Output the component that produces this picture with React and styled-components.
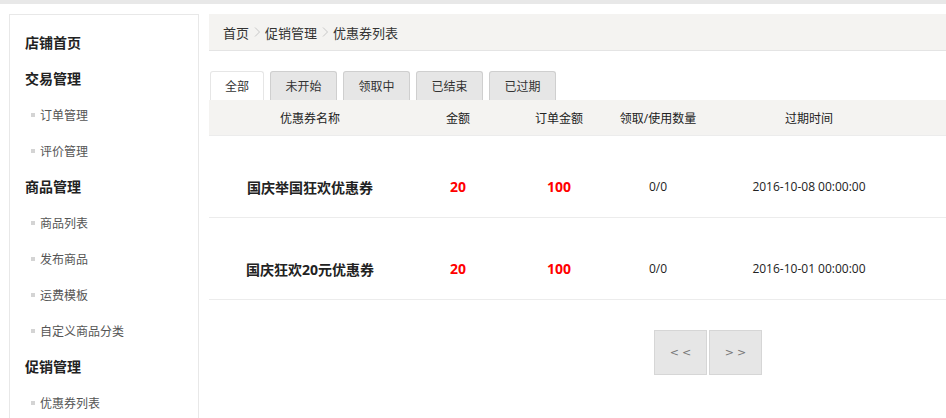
import React from 'react';
import styled, { createGlobalStyle } from 'styled-components';

const GlobalStyle = createGlobalStyle`
  html, body {
    margin: 0;
    padding: 0;
    background: #fff;
    font-family: "Open Sans", "Noto Sans CJK SC", sans-serif;
    color: #333;
  }
`;

const TopStrip = styled.div`
  height: 4px;
  background: #e8e8e8;
`;

const Page = styled.div`
  display: flex;
  align-items: flex-start;
  gap: 10px;
  padding: 10px 0 0 9px;
  height: 404px;
  overflow: hidden;
`;

const Sidebar = styled.nav`
  flex: 0 0 190px;
  min-height: 420px;
  border: 1px solid #e8e8e8;
  padding: 9px 0 0 15px;
  box-sizing: border-box;
`;

const NavGroup = styled.div`
  height: 36px;
  display: flex;
  align-items: center;
  font-size: 14px;
  font-weight: bold;
  color: #222;
`;

const NavItem = styled.div`
  height: 36px;
  display: flex;
  align-items: center;
  gap: 5px;
  padding: 2px 0 0 6px;
  box-sizing: border-box;
  font-size: 12px;
  color: #555;

  &::before {
    content: '';
    width: 4px;
    height: 4px;
    background: #d4d4d4;
  }
`;

const Main = styled.main`
  flex: 1;
  min-width: 0;
`;

const Breadcrumb = styled.div`
  height: 36px;
  background: #f4f3f1;
  border-bottom: 1px solid #e4e4e4;
  display: flex;
  align-items: center;
  gap: 4px;
  padding-left: 14px;
  font-size: 13px;
  color: #333;
`;

const Tabs = styled.div`
  display: flex;
  gap: 6px;
  margin-top: 20px;
  padding-left: 1px;
`;

const Tab = styled.div`
  width: ${p => (p.$active ? 54 : 67)}px;
  height: 29px;
  box-sizing: border-box;
  display: flex;
  align-items: center;
  justify-content: center;
  font-size: 12px;
  color: #333;
  border: 1px solid ${p => (p.$active ? '#e6e6e6' : '#cfcfcf')};
  border-bottom: none;
  border-radius: 3px 3px 0 0;
  background: ${p => (p.$active ? '#fff' : '#e6e6e6')};
`;

const Row = styled.div`
  display: grid;
  grid-template-columns: 202px 94px 108px 90px 212px 1fr;
  align-items: center;
  border-bottom: 1px solid #ececec;
`;

const HeadRow = styled(Row)`
  height: 35px;
  background: #f4f3f1;
  font-size: 12px;
  color: #444;
`;

const BodyRow = styled(Row)`
  height: 82px;
  padding-top: 20px;
  box-sizing: border-box;
`;

const Cell = styled.div`
  text-align: center;
  font-size: ${p => p.$size || 12}px;
  font-weight: ${p => (p.$bold ? 'bold' : 'normal')};
  color: ${p => (p.$red ? '#ff0000' : '#222')};
`;

const Pager = styled.div`
  display: flex;
  gap: 2px;
  margin: 30px 0 0 445px;
`;

const PageButton = styled.button`
  width: 53px;
  height: 45px;
  background: #e6e6e6;
  border: 1px solid #d6d6d6;
  color: #777;
  font-family: "DejaVu Sans", sans-serif;
  font-size: 11px;
  letter-spacing: 3px;
  padding: 0 0 0 3px;
`;

const Chevron = () => (
  <svg width="8" height="12" viewBox="0 0 8 12">
    <path d="M2 1.5 L6.5 6 L2 10.5" fill="none" stroke="#c8c8c8" strokeWidth="1" />
  </svg>
);

const coupons = [
  { name: '国庆举国狂欢优惠券', amount: 20, order: 100, used: '0/0', expire: '2016-10-08 00:00:00' },
  { name: '国庆狂欢20元优惠券', amount: 20, order: 100, used: '0/0', expire: '2016-10-01 00:00:00' },
];

export default function App() {
  return (
    <>
      <GlobalStyle />
      <TopStrip />
      <Page>
        <Sidebar>
          <NavGroup>店铺首页</NavGroup>
          <NavGroup>交易管理</NavGroup>
          <NavItem>订单管理</NavItem>
          <NavItem>评价管理</NavItem>
          <NavGroup>商品管理</NavGroup>
          <NavItem>商品列表</NavItem>
          <NavItem>发布商品</NavItem>
          <NavItem>运费模板</NavItem>
          <NavItem>自定义商品分类</NavItem>
          <NavGroup>促销管理</NavGroup>
          <NavItem>优惠券列表</NavItem>
        </Sidebar>
        <Main>
          <Breadcrumb>
            首页<Chevron />促销管理<Chevron />优惠券列表
          </Breadcrumb>
          <Tabs>
            <Tab $active>全部</Tab>
            <Tab>未开始</Tab>
            <Tab>领取中</Tab>
            <Tab>已结束</Tab>
            <Tab>已过期</Tab>
          </Tabs>
          <HeadRow>
            <Cell>优惠券名称</Cell>
            <Cell>金额</Cell>
            <Cell>订单金额</Cell>
            <Cell>领取/使用数量</Cell>
            <Cell>过期时间</Cell>
            <Cell />
          </HeadRow>
          {coupons.map(c => (
            <BodyRow key={c.name}>
              <Cell $bold $size={14}>{c.name}</Cell>
              <Cell $bold $red $size={14}>{c.amount}</Cell>
              <Cell $bold $red $size={14}>{c.order}</Cell>
              <Cell>{c.used}</Cell>
              <Cell>{c.expire}</Cell>
              <Cell />
            </BodyRow>
          ))}
          <Pager>
            <PageButton>&lt;&lt;</PageButton>
            <PageButton>&gt;&gt;</PageButton>
          </Pager>
        </Main>
      </Page>
    </>
  );
}
